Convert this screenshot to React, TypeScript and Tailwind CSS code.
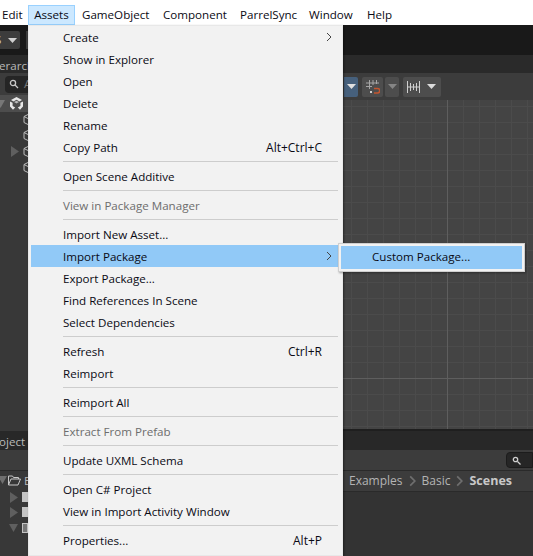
import React from "react";

const font = { fontFamily: '"Open Sans","Noto Sans","Liberation Sans",sans-serif' };

type Item = { label?: string; shortcut?: string; arrow?: boolean; disabled?: boolean; active?: boolean; sep?: boolean };

const items: Item[] = [
  { label: "Create", arrow: true },
  { label: "Show in Explorer" },
  { label: "Open" },
  { label: "Delete" },
  { label: "Rename" },
  { label: "Copy Path", shortcut: "Alt+Ctrl+C" },
  { sep: true },
  { label: "Open Scene Additive" },
  { sep: true },
  { label: "View in Package Manager", disabled: true },
  { sep: true },
  { label: "Import New Asset..." },
  { label: "Import Package", arrow: true, active: true },
  { label: "Export Package..." },
  { label: "Find References In Scene" },
  { label: "Select Dependencies" },
  { sep: true },
  { label: "Refresh", shortcut: "Ctrl+R" },
  { label: "Reimport" },
  { sep: true },
  { label: "Reimport All" },
  { sep: true },
  { label: "Extract From Prefab", disabled: true },
  { sep: true },
  { label: "Update UXML Schema" },
  { sep: true },
  { label: "Open C# Project" },
  { label: "View in Import Activity Window" },
  { sep: true },
  { label: "Properties...", shortcut: "Alt+P" },
];

function Chevron({ color = "#444", w = 6, h = 10, sw = 1 }: { color?: string; w?: number; h?: number; sw?: number }) {
  return (
    <svg width={w} height={h} viewBox="0 0 6 10" fill="none" stroke={color} strokeWidth={sw}>
      <path d="M1 1l4 4-4 4" />
    </svg>
  );
}

function Cube() {
  return (
    <svg width="12" height="13" viewBox="0 0 12 13" fill="none" stroke="#bdbdbd" strokeWidth="1" className="shrink-0">
      <path d="M1 3.5L6 1l5 2.5v6L6 12l-5-2.5z M1 3.5L6 6l5-2.5 M6 6v6" />
    </svg>
  );
}

function Tri({ open = false, color = "#5f5f5f" }: { open?: boolean; color?: string }) {
  return (
    <svg width="9" height="11" viewBox="0 0 9 11" fill={color}>
      {open ? <path d="M0 2h9L4.5 10z" /> : <path d="M0 0l8 5.5L0 11z" />}
    </svg>
  );
}

function Caret({ color = "#d0d0d0" }: { color?: string }) {
  return (
    <svg width="9" height="5" viewBox="0 0 9 5" fill={color}>
      <path d="M0 0h9L4.5 5z" />
    </svg>
  );
}

function UnityLogo() {
  return (
    <svg width="13" height="13" viewBox="0 0 13 13" fill="#e8e8e8">
      <path d="M6.5 0L12 3l-2.5 1.4-3-1.7-3 1.7L1 3z" />
      <path d="M0 4.4l2.6 1.4v3.2L5.2 10.5 3 12.8 0 9.5z" />
      <path d="M13 4.4l-2.6 1.4v3.2l-2.6 1.500 2.2 2.300 3-3.300z" />
      <path d="M4 5l2.5-1.3L9 5 6.5 6.4z" opacity=".7" />
    </svg>
  );
}

function Menu() {
  return (
    <div className="absolute left-[28px] top-[25px] w-[315px] h-[531px] bg-[#f2f2f2] border border-[#e8e8e8] pl-[2px] pr-[4px] text-[11.6px] text-[#0a0a14] shadow-[1px_1px_2px_rgba(0,0,0,0.4)]">
      {items.map((it, i) =>
        it.sep ? (
          <div key={i} className="h-[7px] flex items-center pl-[32px]">
            <div className="h-px w-full bg-[#cdcdcd]" />
          </div>
        ) : (
          <div
            key={i}
            className={`relative h-[22px] flex items-center pl-[32px] pt-[1px] ${it.active ? "bg-[#91c9f7] -mr-[4px] pr-[20px]" : "pr-[16px]"} ${it.disabled ? "text-[#6d6d6d]" : ""}`}
          >
            <span className="flex-1 whitespace-nowrap">{it.label}</span>
            {it.shortcut && <span className="whitespace-nowrap text-[12px]">{it.shortcut}</span>}
            {it.arrow && (
              <span className="absolute left-[295px] top-[6px] flex">
                <Chevron />
              </span>
            )}
          </div>
        )
      )}
    </div>
  );
}

function Submenu() {
  return (
    <div className="absolute left-[338px] top-[243px] w-[187px] h-[29px] bg-[#f2f2f2] border border-[#cfcfcf] p-[2px] text-[11.6px] text-[#0a0a14] shadow-[1px_1px_2px_rgba(0,0,0,0.35)]">
      <div className="h-full bg-[#91c9f7] flex items-center pl-[31px] pb-[1px]">Custom Package...</div>
    </div>
  );
}

function Background() {
  return (
    <div className="flex flex-col h-full">
      <div className="h-[25px] bg-white flex items-center text-[11.6px] text-[#0a0a14] pl-[2px] pt-[5px]">
        <span className="w-[26px]">Edit</span>
        <span className="w-[47px] h-[20px] flex items-center justify-center bg-[#cce8ff] border border-[#99d1ff]">Assets</span>
        <span className="ml-[7px] w-[81px]">GameObject</span>
        <span className="w-[77px]">Component</span>
        <span className="w-[69px]">ParrelSync</span>
        <span className="w-[58px]">Window</span>
        <span>Help</span>
      </div>
      <div className="h-[30px] bg-[#191919] flex items-start pt-[6px]">
        <div className="w-[20px] h-[18px] bg-[#3c3c3c] rounded-r-[2px] flex items-center justify-between pr-[3px] text-[#ccc] text-[11.6px] overflow-hidden">
          <span className="-ml-[5px]">S</span>
          <Caret />
        </div>
        <div className="ml-[6px] w-[2px] h-[18px] bg-[#3c3c3c]" />
      </div>
      <div className="h-[18px] bg-[#2a2a2a] flex items-end overflow-hidden text-[11.6px] text-[#b8b8b8]">
        <span className="whitespace-nowrap -ml-[1px] leading-[15px]">erarch</span>
      </div>
      <div className="flex-1 flex min-h-0">
        <div className="w-[28px] flex flex-col bg-[#383838] overflow-hidden">
          <div className="h-[22px] bg-[#3c3c3c] flex items-center pl-[5px] shrink-0">
            <div className="w-[30px] h-[17px] bg-[#252525] rounded-[4px] flex items-center pl-[4px] shrink-0 text-[11.6px] text-[#777]">
              <svg width="13" height="11" viewBox="0 0 13 11" fill="none" stroke="#c8c8c8" strokeWidth="1.3">
                <circle cx="4" cy="4" r="2.6" />
                <path d="M6 6l3 3" />
              </svg>
              <span className="ml-[2px]">A</span>
            </div>
          </div>
          <div className="h-[17px] bg-[#4d4d4d] relative flex items-center pl-[10px] shrink-0">
            <span className="absolute left-[-4px] top-[3px] flex"><Tri open color="#777" /></span>
            <UnityLogo />
          </div>
          <div className="flex flex-col gap-[3px] pt-[1px] pl-[23px]">
            <Cube />
            <Cube />
            <Cube />
            <Cube />
          </div>
        </div>
        <div className="flex-1 flex flex-col min-w-0">
          <div className="h-[27px] bg-[#3c3c3c] flex items-center pl-[316px]">
            <div className="w-[14px] h-[20px] bg-[#46607c] flex items-center justify-center rounded-r-[2px]">
              <Caret color="#e0e0e0" />
            </div>
            <div className="ml-[4px] w-[21px] h-[20px] bg-[#4d4d4d] rounded-[2px] flex items-center justify-center">
              <svg width="14" height="14" viewBox="0 0 14 14" fill="none">
                <path d="M3.5 0v9M7 0v5M10.500 0v4M0 3h13M0 6.500h6" stroke="#a6a6a6" />
                <path d="M8 8.500h3.500a1.800 1.800 0 0 1 0 4.500H8" stroke="#c2562f" strokeWidth="1.600" />
                <rect x="4" y="11" width="2" height="2" fill="#d0d0d0" />
              </svg>
            </div>
            <div className="ml-[2px] w-[14px] h-[20px] bg-[#4d4d4d] rounded-[2px] flex items-center justify-center">
              <Caret color="#858585" />
            </div>
            <div className="ml-[4px] w-[38px] h-[20px] bg-[#4d4d4d] rounded-[2px] flex items-center gap-[7px] pl-[4px]">
              <svg width="13" height="12" viewBox="0 0 13 12" fill="none" stroke="#d0d0d0">
                <path d="M.5 0v12M12.500 0v12M.5 6h12M3.500 2v8M6.500 3v6M9.500 2v8" />
              </svg>
              <Caret color="#dcdcdc" />
            </div>
          </div>
          <div className="h-[329px] bg-[#444444] bg-[linear-gradient(#4b4b4b_1px,transparent_1px),linear-gradient(90deg,#4b4b4b_1px,transparent_1px)] bg-[length:16px_16px] bg-[position:3px_6px] relative">
            <div className="absolute left-[419px] top-0 bottom-0 w-[1px] bg-[#5e5e5e]" />
            <div className="absolute left-0 right-0 top-[278px] h-[1px] bg-[#5e5e5e]" />
          </div>
          <div className="h-[2px] bg-[#1f1f1f]" />
        </div>
      </div>
      <div className="absolute left-[11px] top-[146px] flex">
        <Tri />
      </div>
    </div>
  );
}

function Project() {
  return (
    <div className="absolute left-0 right-0 top-[431px] bottom-0 flex flex-col text-[11.6px] text-[#b8b8b8]">
      <div className="h-[19px] bg-[#282828] flex items-center pt-[3px]">
        <span className="-ml-[1px] whitespace-nowrap">oject</span>
      </div>
      <div className="h-[21px] bg-[#3c3c3c] border-b border-[#2a2a2a] flex justify-end items-center">
        <div className="w-[27px] h-[16px] bg-[#262626] border border-[#1c1c1c] rounded-l-[4px] flex items-center pl-[5px]">
          <svg width="9" height="9" viewBox="0 0 9 9" fill="none" stroke="#d0d0d0" strokeWidth="1.300">
            <circle cx="3.500" cy="3.500" r="2.200" />
            <path d="M5.500 5.500L8.500 8.500" />
          </svg>
        </div>
      </div>
      <div className="flex-1 flex min-h-0">
        <div className="w-[28px] bg-[#383838] relative">
          <div className="absolute left-[-2px] top-[3px] flex"><Tri open color="#6f6f6f" /></div>
          <svg className="absolute left-[8px] top-[4px]" width="13" height="11" viewBox="0 0 13 11" fill="none" stroke="#c8c8c8">
            <path d="M.5 10V1h4l1 1.500h5V4M.5 10h9.500L12.500 4H3L.5 10z" />
          </svg>
          <span className="absolute left-[24px] top-[1px]">E</span>
          <div className="absolute left-[10px] top-[21px] flex"><Tri /></div>
          <div className="absolute left-[22px] top-[21px] w-[6px] h-[10px] bg-[#c4c4c4]" />
          <div className="absolute left-[10px] top-[36px] flex"><Tri /></div>
          <div className="absolute left-[22px] top-[36px] w-[6px] h-[10px] bg-[#c4c4c4]" />
          <div className="absolute left-[9px] top-[51px] flex"><Tri open /></div>
          <div className="absolute left-[22px] top-[52px] w-[6px] h-[10px] border border-[#c4c4c4] bg-[#777]" />
        </div>
        <div className="flex-1 flex flex-col min-w-0 bg-[#333333]">
          <div className="h-[21px] bg-[#3c3c3c] border-b border-[#2a2a2a] flex items-center pl-[321px] text-[12px] text-[#b4b4b4]">
            <span>Examples</span>
            <span className="ml-[6px] mr-[6px] flex"><Chevron color="#6e6e6e" w={7} h={12} sw={1.5} /></span>
            <span>Basic</span>
            <span className="ml-[6px] mr-[6px] flex"><Chevron color="#6e6e6e" w={7} h={12} sw={1.5} /></span>
            <span className="font-bold text-[#c8c8c8] text-[12.5px]">Scenes</span>
          </div>
        </div>
      </div>
    </div>
  );
}

export default function App() {
  return (
    <div className="relative w-[533px] h-[556px] overflow-hidden bg-[#333]" style={font}>
      <Background />
      <Project />
      <Menu />
      <Submenu />
    </div>
  );
}
